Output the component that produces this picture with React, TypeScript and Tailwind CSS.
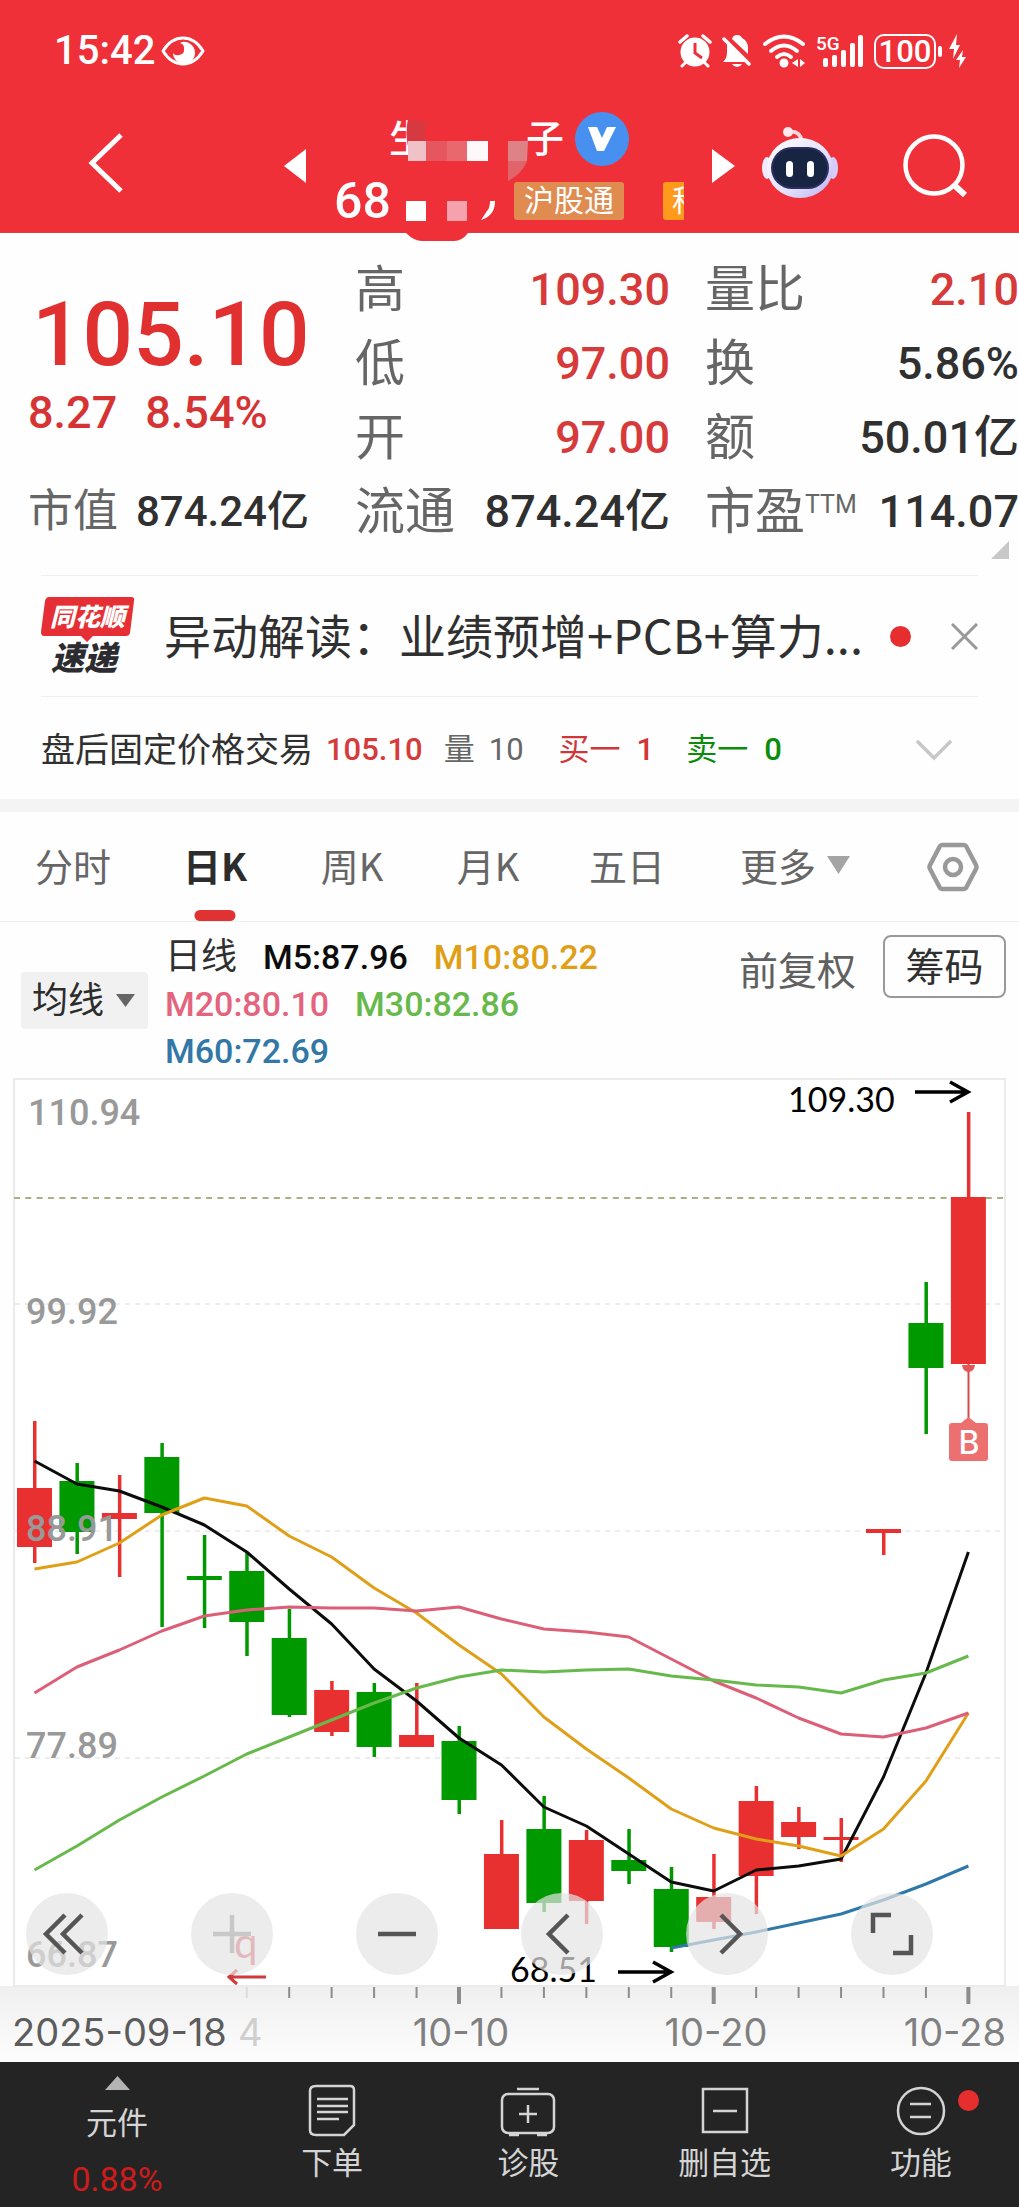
import React, { useState } from 'react'

const UP = '#e83030'
const DOWN = '#009900'

// chart geometry, in viewBox units
const FIRST_X = 34.5
const STEP_X = 42.45
const BODY_W = 35
const PLOT_H = 908

const xAt = (i: number) => FIRST_X + i * STEP_X

// [rising, body top, body bottom, high, low]
const candles: [boolean, number, number, number, number][] = [
  [true, 410, 469, 343, 485],
  [false, 403, 454, 385, 476],
  [true, 435, 441, 397, 499],
  [false, 379, 435, 365, 549],
  [false, 498, 502, 457, 550],
  [false, 493, 544, 474, 578],
  [false, 560, 637, 531, 639],
  [true, 612, 654, 603, 658],
  [false, 614, 669, 605, 679],
  [true, 657, 669, 605, 669],
  [false, 663, 722, 648, 736],
  [true, 776, 851, 742, 851],
  [false, 751, 825, 718, 834],
  [true, 762, 823, 752, 846],
  [false, 782, 793, 751, 806],
  [false, 811, 869, 789, 874],
  [true, 819, 844, 776, 851],
  [true, 723, 798, 708, 836],
  [true, 744, 759, 729, 771],
  [true, 759, 762, 740, 784],
  [true, 451, 455, 451, 477],
  [false, 245, 290, 204, 356],
  [true, 119, 286, 34, 286],
]

const averages = [
  { name: 'M5', color: '#0c0c0c', start: 0, points: [383, 406, 413, 429, 447, 474, 511, 546, 591, 623, 660, 687, 729, 748, 776, 804, 813, 792, 788, 781, 699, 595, 474] },
  { name: 'M10', color: '#dfa018', start: 0, points: [491, 484, 465, 437, 420, 428, 458, 479, 510, 535, 567, 596, 639, 671, 700, 731, 750, 761, 768, 778, 751, 703, 635] },
  { name: 'M20', color: '#dc5f78', start: 0, points: [615, 589, 572, 553, 538, 532, 529, 530, 530, 533, 529, 541, 551, 554, 559, 581, 603, 620, 640, 656, 659, 650, 635] },
  { name: 'M30', color: '#66b94a', start: 0, points: [792, 768, 742, 719, 698, 676, 659, 642, 625, 610, 599, 592, 594, 592, 591, 598, 602, 607, 609, 615, 602, 595, 578] },
  { name: 'M60', color: '#2f78a8', start: 15, points: [870, 862, 854, 845, 836, 822, 806, 788] },
]

const priceLabels = [
  { text: '110.94', x: 28, y: 47 },
  { text: '99.92', x: 26, y: 246 },
  { text: '88.91', x: 26, y: 463 },
  { text: '77.89', x: 26, y: 680 },
  { text: '66.87', x: 26, y: 889 },
]

const tabs = [
  { label: '分时', cell: 'w-[146px]' },
  { label: '日K', cell: 'w-[138px]' },
  { label: '周K', cell: 'w-[136px]' },
  { label: '月K', cell: 'w-[136px]' },
  { label: '五日', cell: 'w-[142px]' },
]

function StatusBar() {
  return (
    <div className="flex h-[100px] items-center justify-between pt-[2px] pr-[51px] pl-[54px]">
      <div className="flex items-center gap-[6px]">
        <span className="text-[40px] leading-[48px] font-medium">15:42</span>
        <svg width="44" height="30" viewBox="0 0 44 30" fill="none">
          <path d="M2 15Q10 2 22 2T42 15Q34 28 22 28T2 15Z" stroke="white" strokeWidth="3" strokeLinejoin="round" />
          <path d="M21 6A11 11 0 1 1 12 17Q14 20 18 19Q24 18 23 12Q23 8 19 7Z" fill="white" />
        </svg>
      </div>

      <div className="flex items-center gap-[10px]">
        <svg width="34" height="34" viewBox="0 0 34 34" fill="none">
          <circle cx="17" cy="18" r="14.500" fill="white" />
          <path d="M17 9V19L24 24" stroke="#ef3038" strokeWidth="3" />
          <path d="M2 8L9 2M32 8L25 2" stroke="white" strokeWidth="3.500" strokeLinecap="round" />
          <path d="M8 28L4 32M26 28L30 32" stroke="white" strokeWidth="3" strokeLinecap="round" />
        </svg>
        <svg width="30" height="34" viewBox="0 0 30 34" fill="none">
          <path d="M10 5Q11 1 15 1T20 4Q26 7 26 14V20Z" fill="white" />
          <path d="M5 9L24 28H1Q5 24 5 19Z" fill="white" />
          <path d="M10 30H20Q18 33 15 33T10 30Z" fill="white" />
          <path d="M2 5L27 30" stroke="white" strokeWidth="3.500" strokeLinecap="round" />
        </svg>
        <svg width="44" height="34" viewBox="0 0 44 34" fill="none" stroke="white" strokeWidth="4" strokeLinecap="round">
          <path d="M3 10Q22 -5 41 10" />
          <path d="M9 17Q22 6 35 17" />
          <path d="M15 23Q22 17 29 23" />
          <circle cx="22" cy="29" r="2.500" fill="white" />
          <path d="M36 25V33L30 29ZM38 25V33L43 29Z" fill="white" stroke="none" />
        </svg>
        <svg width="48" height="36" viewBox="0 0 48 36">
          <text x="0" y="17" className="font-['Roboto'] text-[19px] font-medium" fill="white">5G</text>
          <g fill="white">
            <rect x="7" y="25" width="5" height="9" rx="2" />
            <rect x="16" y="22" width="5" height="12" rx="2" />
            <rect x="25" y="17" width="5" height="17" rx="2" />
            <rect x="34" y="10" width="5" height="24" rx="2" />
            <rect x="42" y="2" width="5" height="32" rx="2" />
          </g>
        </svg>
        <div className="flex items-center gap-[2px]">
          <span className="flex h-[35px] w-[62px] items-center justify-center rounded-[10px] border-2 border-white text-[31px] leading-none font-medium">100</span>
          <span className="h-[11px] w-[4px] rounded-full bg-white" />
          <svg width="20" height="36" viewBox="0 0 20 36" fill="white" className="ml-[4px]">
            <path d="M9 1L1 16H6L5 26L12 12H8Z" />
            <path d="M15 17L8 27H12L11 35L18 24H14Z" />
          </svg>
        </div>
      </div>
    </div>
  )
}

function Mosaic() {
  return (
    <svg className="absolute top-0 left-0" width="200" height="142" viewBox="0 0 200 142">
      <path d="M74 18Q70 40 77 55L64 78H55V96Q54 112 61 122H72V133Q80 141 88 141H120Q128 141 134 133V122L160 90L186 56V18Z" fill="#ef3038" />
      <rect x="74" y="21" width="17" height="20" fill="#d63a40" />
      <rect x="74" y="41" width="18" height="20" fill="#eec2c6" />
      <rect x="92" y="41" width="21" height="20" fill="#e6565e" />
      <rect x="113" y="41" width="20" height="20" fill="#e8686e" />
      <rect x="133" y="41" width="21" height="20" fill="#fff8fa" />
      <path d="M174 41H194L193 61H174Z" fill="#dd8286" />
      <path d="M174 61H193Q188 74 174 81Z" fill="#e2646b" />
      <rect x="72" y="101" width="20" height="20" fill="white" />
      <rect x="113" y="101" width="20" height="20" fill="#f5a2ae" />
      <path d="M156 101H161Q161 116 147 120L153 111Q156 108 156 101Z" fill="white" />
    </svg>
  )
}

function Robot() {
  return (
    <svg width="78" height="74" viewBox="0 0 78 74" fill="none">
      <defs>
        <linearGradient id="shell" x1="0" y1="0" x2="1" y2="1">
          <stop offset="0" stopColor="#ffffff" />
          <stop offset="0.600" stopColor="#e3e0fb" />
          <stop offset="1" stopColor="#b9aef0" />
        </linearGradient>
      </defs>
      <path d="M28 6Q39 4 41 16" stroke="#fbd5dc" strokeWidth="4" />
      <circle cx="27" cy="6" r="5" fill="#ffe9ec" />
      <ellipse cx="6" cy="42" rx="5" ry="11" fill="#efeafd" />
      <ellipse cx="72" cy="42" rx="5" ry="11" fill="#d5ccf7" />
      <ellipse cx="39" cy="42" rx="33" ry="30" fill="url(#shell)" />
      <rect x="10" y="21" width="58" height="42" rx="21" fill="#2b3060" />
      <rect x="12" y="23" width="54" height="38" rx="19" fill="#172442" />
      <rect x="25" y="35" width="7" height="16" rx="3.500" fill="white" />
      <rect x="46" y="35" width="7" height="16" rx="3.500" fill="white" />
    </svg>
  )
}

function Header() {
  return (
    <header className="bg-[#ef3038] text-white">
      <StatusBar />
      <div className="flex h-[133px] items-start border-b border-[#d84048]">
        <button aria-label="返回" className="mt-[32px] ml-[86px]">
          <svg width="38" height="62" viewBox="0 0 38 62" fill="none" stroke="white" strokeWidth="5">
            <path d="M35 3L6 31L35 59" />
          </svg>
        </button>
        <button aria-label="上一只" className="mt-[49px] ml-[160px]">
          <svg width="22" height="34" viewBox="0 0 22 34" fill="white">
            <path d="M22 0V34L0 17Z" />
          </svg>
        </button>

        <div className="relative ml-[28px] w-[350px]">
          <div className="flex h-[78px] items-center pl-[55px]">
            <span className="text-[38px] leading-[44px] font-medium">生</span>
            <span className="ml-[99px] text-[38px] leading-[44px] font-medium">子</span>
            <span className="ml-[11px] flex size-[54px] items-center justify-center rounded-full bg-[#4890f0]">
              <svg width="28" height="24" viewBox="0 0 28 24" fill="white">
                <path d="M0 0H9L14 11L19 0H28L16 24H9Z" />
              </svg>
            </span>
          </div>
          <div className="flex h-[46px] items-center whitespace-nowrap">
            <span className="w-[180px] shrink-0 text-[50px] leading-[46px] font-medium">688</span>
            <span className="flex h-[38px] w-[110px] shrink-0 items-center justify-center rounded-[3px] bg-[#e08c50] text-[30px] leading-none">沪股通</span>
            <span className="ml-[39px] flex h-[38px] w-[21px] shrink-0 items-center overflow-hidden rounded-l-[3px] bg-[#ff9a1c] pl-[9px] text-[30px] leading-none">科</span>
          </div>
          <Mosaic />
        </div>

        <button aria-label="下一只" className="mt-[49px] ml-[28px]">
          <svg width="23" height="34" viewBox="0 0 23 34" fill="white">
            <path d="M0 0V34L23 17Z" />
          </svg>
        </button>
        <button aria-label="智能助手" className="mt-[26px] ml-[26px]">
          <Robot />
        </button>
        <button aria-label="搜索" className="mt-[33px] ml-[63px]">
          <svg width="68" height="68" viewBox="0 0 68 68" fill="none" stroke="white" strokeWidth="4.500">
            <circle cx="32" cy="32" r="28.500" />
            <path d="M51 51L63 62" strokeWidth="6" />
          </svg>
        </button>
      </div>
    </header>
  )
}

function Stat({ label, sup, value, up }: { label: string; sup?: string; value: string; up?: boolean }) {
  return (
    <div className="flex h-[74px] items-center justify-between whitespace-nowrap">
      <dt className="flex items-center text-[50px] leading-[60px] text-[#666]">
        {label}
        {sup && <span className="pb-[16px] text-[25px] leading-none">{sup}</span>}
      </dt>
      <dd className={up ? 'text-[45px] leading-[60px] font-medium text-[#d63a3a]' : 'text-[45px] leading-[60px] font-medium text-[#303030]'}>{value}</dd>
    </div>
  )
}

function Quote() {
  return (
    <section className="relative flex h-[342px] pt-[20px]">
      <div className="flex w-[309px] flex-col pl-[28px] text-[#e03030]">
        <div className="mt-[32px] pl-[4px] text-[89px] leading-[100px] font-medium">105.10</div>
        <div className="flex gap-[28px] text-[45px] leading-[56px] font-medium text-[#d63434]">
          <span>8.27</span>
          <span>8.54%</span>
        </div>
        <div className="mt-[34px] flex h-[74px] items-center justify-between whitespace-nowrap">
          <span className="text-[45px] leading-[60px] text-[#666]">市值</span>
          <span className="text-[42px] leading-[60px] font-medium text-[#303030]">874.24亿</span>
        </div>
      </div>
      <dl className="ml-[46px] w-[315px]">
        <Stat label="高" value="109.30" up />
        <Stat label="低" value="97.00" up />
        <Stat label="开" value="97.00" up />
        <Stat label="流通" value="874.24亿" />
      </dl>
      <dl className="ml-[35px] flex-1">
        <Stat label="量比" value="2.10" up />
        <Stat label="换" value="5.86%" />
        <Stat label="额" value="50.01亿" />
        <Stat label="市盈" sup="TTM" value="114.07" />
      </dl>
      <svg className="absolute right-[10px] bottom-[16px]" width="18" height="18" viewBox="0 0 18 18">
        <path d="M18 0V18H0Z" fill="#c8c8c8" />
      </svg>
    </section>
  )
}

function NewsLogo() {
  return (
    <svg width="94" height="86" viewBox="0 0 94 86" className="mt-[8px]">
      <path d="M8 0H90Q94 0 93 4L89 36Q88 39 85 39H52L46 45L40 39H3Q0 39 0 35L4 4Q5 0 8 0Z" fill="#e62f34" />
      <text x="9" y="29" fill="white" className="font-['Noto_Sans_CJK_SC',sans-serif] text-[25px] font-black italic">同花顺</text>
      <text x="10" y="73" fill="#2c2c30" className="font-['Noto_Sans_CJK_SC',sans-serif] text-[33px] font-black italic">速递</text>
    </svg>
  )
}

function News() {
  return (
    <section className="mx-[41px] flex h-[122px] items-center border-y border-[#efefef]">
      <NewsLogo />
      <a href="#news" className="ml-[29px] min-w-0 flex-1 pb-[5px] font-['Noto_Sans_CJK_SC',sans-serif] text-[47px] leading-[64px] whitespace-nowrap text-[#303030]">
        异动解读：业绩预增+PCB+算力...
      </a>
      <span className="size-[21px] shrink-0 rounded-full bg-[#e62e2e]" />
      <button aria-label="关闭" className="ml-[40px] shrink-0">
        <svg width="27" height="27" viewBox="0 0 27 27" stroke="#999" strokeWidth="3">
          <path d="M1 1L26 26M26 1L1 26" />
        </svg>
      </button>
    </section>
  )
}

function AfterHours() {
  return (
    <section className="flex h-[102px] items-center pt-[4px] pr-[66px] pl-[41px] text-[31px] leading-[44px] whitespace-nowrap">
      <span className="text-[34px] text-[#303030]">盘后固定价格交易</span>
      <span className="ml-[13px] font-medium text-[#d63a3a]">105.10</span>
      <span className="ml-[21px] text-[#666]">量</span>
      <span className="ml-[14px] text-[#666]">10</span>
      <span className="ml-[35px] text-[#cf3838]">买一</span>
      <span className="ml-[16px] font-medium text-[#cf3838]">1</span>
      <span className="ml-[32px] text-[#0c8c0c]">卖一</span>
      <span className="ml-[16px] font-medium text-[#0c8c0c]">0</span>
      <button aria-label="展开" className="ml-auto">
        <svg width="38" height="24" viewBox="0 0 38 24" fill="none" stroke="#c8c8c8" strokeWidth="3.500">
          <path d="M2 3L19 20L36 3" />
        </svg>
      </button>
    </section>
  )
}

function PeriodTabs() {
  const [active, setActive] = useState('日K')

  return (
    <nav className="flex h-[110px] items-stretch border-b border-[#eee] font-['Noto_Sans_CJK_SC',sans-serif] text-[38px] leading-[56px] text-[#666]">
      {tabs.map((tab) => (
        <button key={tab.label} onClick={() => setActive(tab.label)} className={tab.cell + ' relative pb-[3px] text-center'}>
          {active === tab.label ? <b className="font-bold text-[#2c2c2c]">{tab.label}</b> : tab.label}
          {active === tab.label && <span className="absolute bottom-0 left-1/2 h-[11px] w-[41px] -translate-x-1/2 rounded-full bg-[#e03232]" />}
        </button>
      ))}
      <button className="ml-[42px] flex items-center gap-[11px] pb-[3px]">
        更多
        <svg width="23" height="18" viewBox="0 0 23 18" fill="#a4a4a4">
          <path d="M0 0H23L11.500 18Z" />
        </svg>
      </button>
      <button aria-label="设置" className="mr-[40px] ml-auto">
        <svg width="52" height="50" viewBox="0 0 52 50" fill="none" stroke="#999" strokeWidth="4.500" strokeLinejoin="round">
          <path d="M15 3H37Q38 3 39 4L49 23Q50 25 49 27L39 46Q38 47 37 47H15Q14 47 13 46L3 27Q2 25 3 23L13 4Q14 3 15 3Z" />
          <circle cx="26" cy="25" r="8" />
        </svg>
      </button>
    </nav>
  )
}

function Indicators() {
  return (
    <section className="flex h-[156px] items-start">
      <div className="relative mt-[50px] ml-[21px]">
        <label htmlFor="indicator" className="sr-only">指标</label>
        <select id="indicator" className="h-[57px] w-[127px] appearance-none rounded-[4px] bg-[#f1f1f1] pl-[11px] text-[36px] leading-[50px] text-[#2c2c2c]">
          <option>均线</option>
          <option>BOLL</option>
        </select>
        <svg className="pointer-events-none absolute top-[22px] right-[13px]" width="19" height="13" viewBox="0 0 19 13" fill="#666">
          <path d="M0 0H19L9.500 13Z" />
        </svg>
      </div>
      <div className="mt-[12px] ml-[17px] text-[34px] leading-[47px] font-medium whitespace-nowrap">
        <p className="flex gap-[26px]">
          <span className="text-[36px] font-normal text-[#303030]">日线</span>
          <span className="text-[#0c0c0c]">M5:87.96</span>
          <span className="text-[#dfa018]">M10:80.22</span>
        </p>
        <p className="flex gap-[26px]">
          <span className="text-[#e3647c]">M20:80.10</span>
          <span className="text-[#66b94a]">M30:82.86</span>
        </p>
        <p className="text-[#3277a6]">M60:72.69</p>
      </div>
      <button className="mt-[22px] ml-auto text-[39px] leading-[56px] text-[#606060]">前复权</button>
      <button className="mt-[13px] mr-[13px] ml-[27px] h-[63px] w-[123px] rounded-[8px] border-2 border-[#999] pt-[2px] text-[39px] leading-[56px] text-[#303030]">筹码</button>
    </section>
  )
}

function KLineChart() {
  return (
    <svg className="block h-auto w-full" viewBox="0 0 1019 984" fill="none">
      <defs>
        <linearGradient id="axis" x1="0" y1="0" x2="0" y2="1">
          <stop offset="0" stopColor="#efeff0" />
          <stop offset="1" stopColor="#fdfdfd" />
        </linearGradient>
      </defs>
      <rect x="0" y={PLOT_H} width="1019" height="76" fill="url(#axis)" />
      <rect x="14" y="1" width="991" height={PLOT_H - 1} fill="white" stroke="#ebebeb" strokeWidth="2" />

      {[227, 454, 681].map((y) => (
        <line key={y} x1="15" x2="1005" y1={y - 1} y2={y - 1} stroke="#e8e8e8" strokeWidth="1.500" strokeDasharray="5 5" />
      ))}
      <line x1="14" x2="1004" y1="120" y2="120" stroke="#aeae84" strokeWidth="2" strokeDasharray="6 5.300" />

      {candles.map(([up, top, bottom, high, low], i) => (
        <g key={i} fill={up ? UP : DOWN}>
          <rect x={xAt(i) - 1.5} y={high} width="3.500" height={low - high} />
          <rect x={xAt(i) - BODY_W / 2} y={top} width={BODY_W} height={bottom - top} />
        </g>
      ))}

      {averages.map((ma) => (
        <polyline
          key={ma.name}
          points={ma.points.map((y, i) => `${xAt(ma.start + i)},${y}`).join(' ')}
          stroke={ma.color}
          strokeWidth="3"
          strokeLinejoin="round"
        />
      ))}

      {/* buy marker under the last bar */}
      <line x1="968.500" x2="968.500" y1="286" y2="342" stroke="#d84848" strokeWidth="2" />
      <path d="M962 287H975Q974 294 968.500 294T962 287Z" fill="#e25656" />
      <path d="M968.500 339L976 345H985Q988 345 988 348V380Q988 383 985 383H952Q949 383 949 380V348Q949 345 952 345H961Z" fill="#ec7070" />
      <text x="969" y="376" textAnchor="middle" fill="white" className="font-['Inter'] text-[32px] font-medium">B</text>

      <g fill="#999" className="font-['Roboto'] text-[36px] font-medium">
        {priceLabels.map((l) => (
          <text key={l.text} x={l.x} y={l.y}>{l.text}</text>
        ))}
      </g>

      <g fill="black" className="font-['Lato'] text-[34px]">
        <text x="788" y="34">109.30</text>
        <text x="510" y="904">68.51</text>
      </g>
      <g stroke="black" strokeWidth="3.500">
        <path d="M915 14H968M950 4L968 14L950 24" />
        <path d="M618 894H671M653 884L671 894L653 904" />
      </g>
      <text x="234" y="880" fill="#dc5560" className="font-['Lato'] text-[42px]">q</text>
      <path d="M266 899H230M237 892L229 899L237 906" stroke="#d03a3a" strokeWidth="3" />

      {candles.map((_, i) => {
        if (i < 5) return null
        const major = i === 10 || i === 16 || i === 22
        return (
          <rect
            key={i}
            x={xAt(i) - (major ? 2 : 1)}
            y={PLOT_H + 1}
            width={major ? 4 : 2}
            height={major ? 17 : 11}
            fill={i === 5 ? '#dcdcdc' : '#8c8c8c'}
          />
        )
      })}
      <g fill="#808080" className="font-['Inter'] text-[38px]">
        <text x="12" y="968" fill="#5c5c5c">2025-09-18</text>
        <text x="238" y="968" fill="#cfcfcf">4</text>
        <text x="461" y="968" textAnchor="middle">10-10</text>
        <text x="716" y="968" textAnchor="middle">10-20</text>
        <text x="1006" y="968" textAnchor="end">10-28</text>
      </g>
    </svg>
  )
}

const controls = [
  { label: '最早', d: 'M39 22L20 41L39 60M56 22L37 41L56 60', color: '#555' },
  { label: '放大', d: 'M22 41H60M41 22V60', color: '#c8c8c8' },
  { label: '缩小', d: 'M22 41H60', color: '#555' },
  { label: '左移', d: 'M47 22L28 41L47 60', color: '#555' },
  { label: '右移', d: 'M35 22L54 41L35 60', color: '#555' },
  { label: '全屏', d: 'M22 40V22H40M60 42V60H42', color: '#555' },
]

function ChartControls() {
  return (
    <div className="absolute right-[86px] bottom-[87px] left-[26px] flex justify-between">
      {controls.map((c) => (
        <button key={c.label} aria-label={c.label} className="size-[82px] rounded-full bg-[#e4e4e4]/70">
          <svg width="82" height="82" viewBox="0 0 82 82" fill="none" stroke={c.color} strokeWidth="4.500">
            <path d={c.d} />
          </svg>
        </button>
      ))}
    </div>
  )
}

const actions = [
  {
    label: '下单',
    icon: <path d="M8 2H42Q46 2 46 6V41L36 51H8Q2 51 2 46V7Q2 2 8 2ZM9 15H40M9 22H40M9 28H40M9 35H31" />,
  },
  {
    label: '诊股',
    icon: (
      <>
        <rect x="-2" y="10" width="52" height="39" rx="6" />
        <path d="M13 5H35M15 30H33M24 21V39M5 51H15M33 51H43" />
      </>
    ),
  },
  {
    label: '删自选',
    icon: <path d="M2 5H46V48H2ZM12 27H36" />,
  },
  {
    label: '功能',
    dot: true,
    icon: (
      <>
        <circle cx="24" cy="27" r="23" />
        <path d="M13 20H34M13 33H34" />
      </>
    ),
  },
]

function BottomBar() {
  return (
    <footer className="flex h-[145px] bg-[#242424] text-[31px] leading-[40px] text-[#d4d4d4]">
      <button className="flex w-[234px] flex-col items-center pt-[14px]">
        <svg width="25" height="14" viewBox="0 0 25 14" fill="#b4b4b4">
          <path d="M12.500 0L25 14H0Z" />
        </svg>
        <span className="mt-[14px]">元件</span>
        <span className="mt-[15px] text-[34px] text-[#cc1c1c]">0.88%</span>
      </button>
      {actions.map((a) => (
        <button key={a.label} className="relative flex flex-1 flex-col items-center pt-[22px]">
          <svg width="56" height="54" viewBox="-4 0 56 54" fill="none" stroke="#d4d4d4" strokeWidth="2.500">
            {a.icon}
          </svg>
          <span className="mt-[6px]">{a.label}</span>
          {a.dot && <span className="absolute top-[28px] right-[40px] size-[21px] rounded-full bg-[#e62e2e]" />}
        </button>
      ))}
    </footer>
  )
}

export default function App() {
  return (
    <div className="w-full overflow-hidden bg-[#fefefe] font-['Roboto','Noto_Sans_CJK_SC',sans-serif]">
      <Header />
      <Quote />
      <News />
      <AfterHours />
      <div className="h-[13px] bg-[#f4f4f4]" />
      <PeriodTabs />
      <Indicators />
      <div className="relative">
        <KLineChart />
        <ChartControls />
      </div>
      <BottomBar />
    </div>
  )
}
